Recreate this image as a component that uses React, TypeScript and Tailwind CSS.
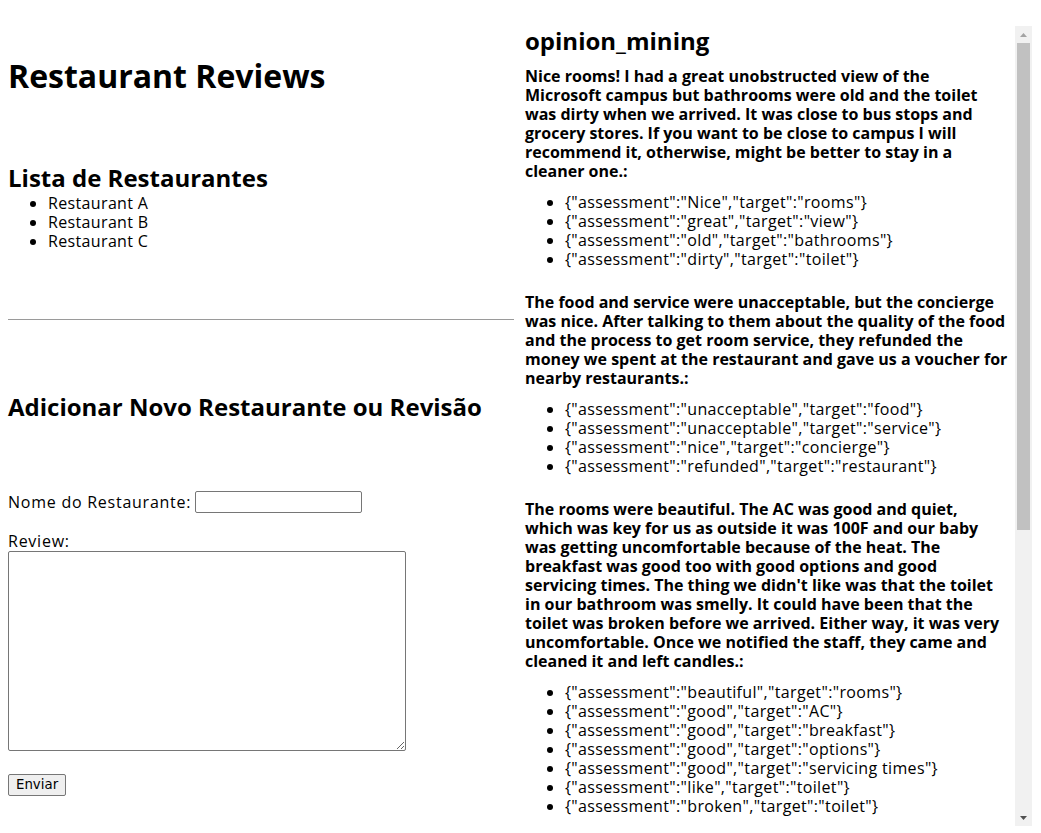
const restaurants = ['Restaurant A', 'Restaurant B', 'Restaurant C'];

type Opinion = { assessment: string; target: string };

// review text kept as the lines it breaks into on the page
const reviews: { lines: string[]; opinions: Opinion[] }[] = [
  {
    lines: [
      'Nice rooms! I had a great unobstructed view of the',
      'Microsoft campus but bathrooms were old and the toilet',
      'was dirty when we arrived. It was close to bus stops and',
      'grocery stores. If you want to be close to campus I will',
      'recommend it, otherwise, might be better to stay in a',
      'cleaner one.:',
    ],
    opinions: [
      { assessment: 'Nice', target: 'rooms' },
      { assessment: 'great', target: 'view' },
      { assessment: 'old', target: 'bathrooms' },
      { assessment: 'dirty', target: 'toilet' },
    ],
  },
  {
    lines: [
      'The food and service were unacceptable, but the concierge',
      'was nice. After talking to them about the quality of the food',
      'and the process to get room service, they refunded the',
      'money we spent at the restaurant and gave us a voucher for',
      'nearby restaurants.:',
    ],
    opinions: [
      { assessment: 'unacceptable', target: 'food' },
      { assessment: 'unacceptable', target: 'service' },
      { assessment: 'nice', target: 'concierge' },
      { assessment: 'refunded', target: 'restaurant' },
    ],
  },
  {
    lines: [
      'The rooms were beautiful. The AC was good and quiet,',
      'which was key for us as outside it was 100F and our baby',
      'was getting uncomfortable because of the heat. The',
      'breakfast was good too with good options and good',
      "servicing times. The thing we didn't like was that the toilet",
      'in our bathroom was smelly. It could have been that the',
      'toilet was broken before we arrived. Either way, it was very',
      'uncomfortable. Once we notified the staff, they came and',
      'cleaned it and left candles.:',
    ],
    opinions: [
      { assessment: 'beautiful', target: 'rooms' },
      { assessment: 'good', target: 'AC' },
      { assessment: 'good', target: 'breakfast' },
      { assessment: 'good', target: 'options' },
      { assessment: 'good', target: 'servicing times' },
      { assessment: 'like', target: 'toilet' },
      { assessment: 'broken', target: 'toilet' },
    ],
  },
];

const ScrollBar = () => (
  <div className="flex h-full w-[17px] shrink-0 flex-col bg-[#f1f1f1]">
    <div className="flex h-[17px] items-center justify-center">
      <svg width="7" height="4" viewBox="0 0 7 4">
        <path d="M3.5 0L7 4H0z" fill="#a3a3a3" />
      </svg>
    </div>
    <div className="mx-[2px] h-[487px] bg-[#c1c1c1]" />
    <div className="flex-1" />
    <div className="flex h-[17px] items-center justify-center">
      <svg width="7" height="4" viewBox="0 0 7 4">
        <path d="M0 0H7L3.5 4z" fill="#505050" />
      </svg>
    </div>
  </div>
);

export default function App() {
  return (
    <div className="flex h-[833px] overflow-hidden bg-white pl-2 font-['Open_Sans',sans-serif] text-black">
      {/* left column: list + form */}
      <div className="w-[508px] shrink-0">
        <h1 className="mt-[56px] text-[32px] font-bold leading-[39px]">Restaurant Reviews</h1>

        <h2 className="mt-[68px] text-[24px] font-bold leading-[29px]">Lista de Restaurantes</h2>
        <ul className="mt-[2px] list-disc pl-10 text-[16px] leading-[19px] tracking-[0.35px]">
          {restaurants.map(r => (
            <li key={r}>{r}</li>
          ))}
        </ul>

        <hr className="mt-[68px] w-[506px] border-0 border-t border-[#9a9a9a]" />

        <h2 className="mt-[72px] text-[24px] font-bold leading-[29px]">Adicionar Novo Restaurante ou Revisão</h2>

        <form className="mt-[70px] text-[16px] leading-[19px] tracking-[0.75px]">
          <div className="flex items-center gap-1">
            <label>Nome do Restaurante:</label>
            <input type="text" className="h-[22px] w-[167px] rounded-[2px] border border-[#767676] bg-white" />
          </div>
          <div className="mt-[19px]">
            <label>Review:</label>
          </div>
          <textarea className="block h-[200px] w-[398px] rounded-[2px] border border-[#767676] bg-white" />
          <button
            type="button"
            className="mt-[23px] h-[22px] rounded-[2px] border border-[#767676] bg-[#efefef] px-[7px] font-['DejaVu_Sans',sans-serif] text-[13.33px] leading-[16px] tracking-normal"
          >
            Enviar
          </button>
        </form>
      </div>

      {/* right column: opinion mining results */}
      <div className="mt-[26px] flex h-[800px] w-[516px] shrink-0">
        <div className="min-w-0 flex-1 overflow-y-auto pl-[9px] [scrollbar-width:none]">
          <h2 className="text-[24px] font-bold leading-[29px]">opinion_mining</h2>
          <div className="mt-3">
            {reviews.map((r, i) => (
              <div key={i} className="mb-6">
                <p className="mb-3 text-[16px] font-bold leading-[19px]">
                  {r.lines.map((l, k) => (
                    <span key={k} className="block whitespace-nowrap">{l}</span>
                  ))}
                </p>
                <ul className="list-disc pl-10 text-[16px] leading-[19px] tracking-[0.35px]">
                  {r.opinions.map((o, j) => (
                    <li key={j}>{JSON.stringify(o)}</li>
                  ))}
                </ul>
              </div>
            ))}
          </div>
        </div>
        <ScrollBar />
      </div>
    </div>
  );
}
